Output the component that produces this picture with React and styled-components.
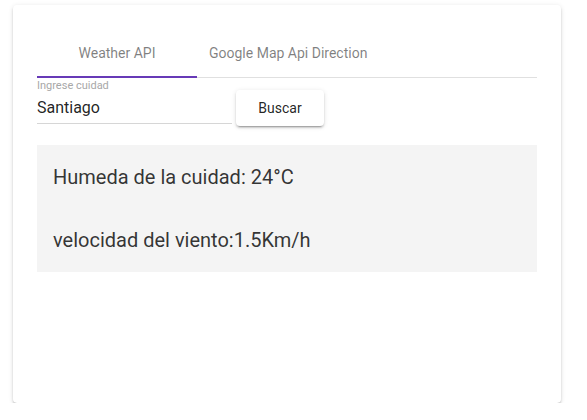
import React from "react";
import styled, { createGlobalStyle } from "styled-components";

const GlobalStyle = createGlobalStyle`
  body {
    margin: 0;
    background: #fff;
    font-family: Roboto, "Liberation Sans", Arial, sans-serif;
  }
`;

const Page = styled.div`
  padding: 5px 26px 0 13px;
`;

const Card = styled.div`
  height: 398px;
  box-sizing: border-box;
  padding: 24px 24px 0;
  background: #fff;
  border-radius: 4px;
  box-shadow: 0px 3px 1px -2px rgba(0, 0, 0, 0.28), 0px 2px 2px 0px rgba(0, 0, 0, 0.16),
    0px 1px 5px 0px rgba(0, 0, 0, 0.12);
`;

const TabBar = styled.div`
  display: flex;
  border-bottom: 1px solid #e0e0e0;
`;

const Tab = styled.div`
  position: relative;
  min-width: 160px;
  height: 48px;
  padding: 0 12px;
  box-sizing: border-box;
  display: flex;
  align-items: center;
  justify-content: center;
  font-size: 14px;
  color: rgba(0, 0, 0, 0.5);
  cursor: pointer;

  &::after {
    content: "";
    position: absolute;
    left: 0;
    right: 0;
    bottom: -1px;
    height: 2px;
    background: ${(p) => (p.$active ? "#673ab7" : "transparent")};
  }
`;

const SearchRow = styled.div`
  display: flex;
  align-items: flex-start;
  gap: 4px;
`;

const Field = styled.label`
  display: flex;
  flex-direction: column;
  width: 195px;
  padding-bottom: 2px;
  border-bottom: 1px solid #d6d6d6;
`;

const FieldLabel = styled.span`
  font-size: 11px;
  line-height: 15px;
  color: #a8a8a8;
`;

const Input = styled.input`
  border: none;
  outline: none;
  padding: 0;
  height: 28px;
  font-family: inherit;
  font-size: 16px;
  color: rgba(0, 0, 0, 0.87);
  background: transparent;
`;

const Button = styled.button`
  margin-top: 12px;
  width: 88px;
  height: 36px;
  border: none;
  border-radius: 4px;
  background: #fff;
  font-family: inherit;
  font-size: 14px;
  color: rgba(0, 0, 0, 0.87);
  box-shadow: 0px 3px 1px -2px rgba(0, 0, 0, 0.2), 0px 2px 2px 0px rgba(0, 0, 0, 0.14),
    0px 1px 5px 0px rgba(0, 0, 0, 0.12);
  cursor: pointer;
`;

const Result = styled.div`
  margin-top: 19px;
  background: #f4f4f4;
  padding: 16px;
  display: flex;
  flex-direction: column;
  gap: 31px;
`;

const Line = styled.p`
  margin: 0;
  font-size: 20px;
  line-height: 32px;
  color: rgba(0, 0, 0, 0.8);
`;

export default function App() {
  return (
    <Page>
      <GlobalStyle />
      <Card>
        <TabBar>
          <Tab $active>Weather API</Tab>
          <Tab>Google Map Api Direction</Tab>
        </TabBar>
        <SearchRow>
          <Field>
            <FieldLabel>Ingrese cuidad</FieldLabel>
            <Input defaultValue="Santiago" />
          </Field>
          <Button>Buscar</Button>
        </SearchRow>
        <Result>
          <Line>Humeda de la cuidad: 24°C</Line>
          <Line>velocidad del viento:1.5Km/h</Line>
        </Result>
      </Card>
    </Page>
  );
}
